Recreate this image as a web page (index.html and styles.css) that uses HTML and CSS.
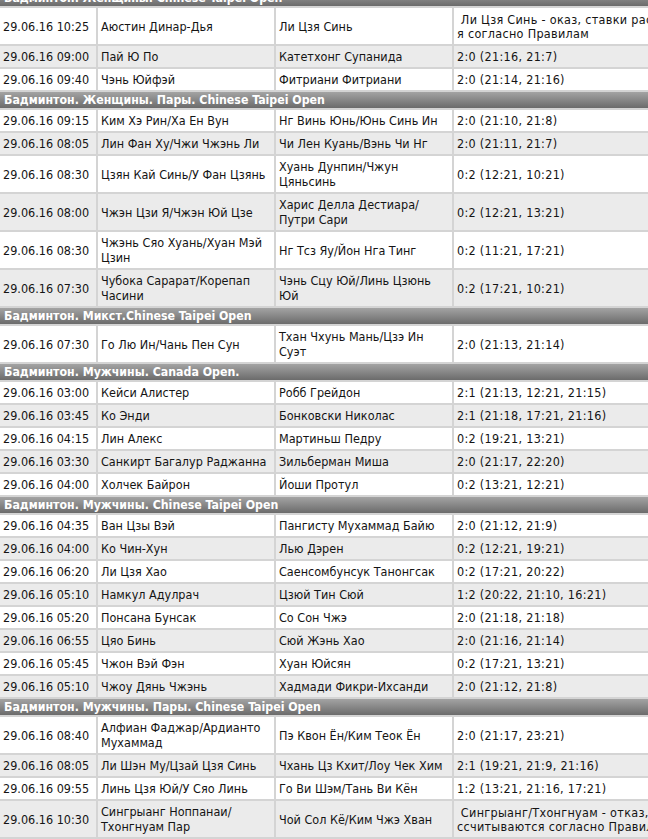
FILE: index.html
```html
<!DOCTYPE html>
<html lang="ru">
<head>
<meta charset="utf-8">
<title>Результаты</title>
<link rel="stylesheet" href="styles.css">
</head>
<body>
<table class="results">
<colgroup><col class="c-date"><col class="c-p1"><col class="c-p2"><col class="c-res"></colgroup>
<tbody>
<tr class="sec"><td colspan="4">Бадминтон. Женщины. Chinese Taipei Open</td></tr>
<tr><td>29.06.16 10:25</td><td>Аюстин Динар-Дья</td><td>Ли Цзя Синь</td><td class="note">&nbsp;Ли Цзя Синь - оказ, ставки рассчитываютс<br>я согласно Правилам</td></tr>
<tr class="alt"><td>29.06.16 09:00</td><td>Пай Ю По</td><td>Катетхонг Супанида</td><td>2:0 (21:16, 21:7)</td></tr>
<tr><td>29.06.16 09:40</td><td>Чэнь Юйфэй</td><td>Фитриани Фитриани</td><td>2:0 (21:14, 21:16)</td></tr>

<tr class="sec"><td colspan="4">Бадминтон. Женщины. Пары. Chinese Taipei Open</td></tr>
<tr><td>29.06.16 09:15</td><td>Ким Хэ Рин/Ха Ен Вун</td><td>Нг Винь Юнь/Юнь Синь Ин</td><td>2:0 (21:10, 21:8)</td></tr>
<tr class="alt"><td>29.06.16 08:05</td><td>Лин Фан Ху/Чжи Чжэнь Ли</td><td>Чи Лен Куань/Вэнь Чи Нг</td><td>2:0 (21:11, 21:7)</td></tr>
<tr><td>29.06.16 08:30</td><td>Цзян Кай Синь/У Фан Цзянь</td><td>Хуань Дунпин/Чжун<br>Цяньсинь</td><td>0:2 (12:21, 10:21)</td></tr>
<tr class="alt"><td>29.06.16 08:00</td><td>Чжэн Цзи Я/Чжэн Юй Цзе</td><td>Харис Делла Дестиара/<br>Путри Сари</td><td>0:2 (12:21, 13:21)</td></tr>
<tr><td>29.06.16 08:30</td><td>Чжэнь Сяо Хуань/Хуан Мэй<br>Цзин</td><td>Нг Тсз Яу/Йон Нга Тинг</td><td>0:2 (11:21, 17:21)</td></tr>
<tr class="alt"><td>29.06.16 07:30</td><td>Чубока Сарарат/Корепап<br>Часини</td><td>Чэнь Сцу Юй/Линь Цзюнь<br>Юй</td><td>0:2 (17:21, 10:21)</td></tr>

<tr class="sec"><td colspan="4">Бадминтон. Микст.Chinese Taipei Open</td></tr>
<tr><td>29.06.16 07:30</td><td>Го Лю Ин/Чань Пен Сун</td><td>Тхан Чхунь Мань/Цзэ Ин<br>Суэт</td><td>2:0 (21:13, 21:14)</td></tr>

<tr class="sec"><td colspan="4">Бадминтон. Мужчины. Canada Open.</td></tr>
<tr><td>29.06.16 03:00</td><td>Кейси Алистер</td><td>Робб Грейдон</td><td>2:1 (21:13, 12:21, 21:15)</td></tr>
<tr class="alt"><td>29.06.16 03:45</td><td>Ко Энди</td><td>Бонковски Николас</td><td>2:1 (21:18, 17:21, 21:16)</td></tr>
<tr><td>29.06.16 04:15</td><td>Лин Алекс</td><td>Мартиньш Педру</td><td>0:2 (19:21, 13:21)</td></tr>
<tr class="alt"><td>29.06.16 03:30</td><td>Санкирт Багалур Раджанна</td><td>Зильберман Миша</td><td>2:0 (21:17, 22:20)</td></tr>
<tr><td>29.06.16 04:00</td><td>Холчек Байрон</td><td>Йоши Протул</td><td>0:2 (13:21, 12:21)</td></tr>

<tr class="sec"><td colspan="4">Бадминтон. Мужчины. Chinese Taipei Open</td></tr>
<tr><td>29.06.16 04:35</td><td>Ван Цзы Вэй</td><td>Пангисту Мухаммад Байю</td><td>2:0 (21:12, 21:9)</td></tr>
<tr class="alt"><td>29.06.16 04:00</td><td>Ко Чин-Хун</td><td>Лью Дэрен</td><td>0:2 (12:21, 19:21)</td></tr>
<tr><td>29.06.16 06:20</td><td>Ли Цзя Хао</td><td>Саенсомбунсук Танонгсак</td><td>0:2 (17:21, 20:22)</td></tr>
<tr class="alt"><td>29.06.16 05:10</td><td>Намкул Адулрач</td><td>Цзюй Тин Сюй</td><td>1:2 (20:22, 21:10, 16:21)</td></tr>
<tr><td>29.06.16 05:20</td><td>Понсана Бунсак</td><td>Со Сон Чжэ</td><td>2:0 (21:18, 21:18)</td></tr>
<tr class="alt"><td>29.06.16 06:55</td><td>Цяо Бинь</td><td>Сюй Жэнь Хао</td><td>2:0 (21:16, 21:14)</td></tr>
<tr><td>29.06.16 05:45</td><td>Чжон Вэй Фэн</td><td>Хуан Юйсян</td><td>0:2 (17:21, 13:21)</td></tr>
<tr class="alt"><td>29.06.16 05:10</td><td>Чжоу Дянь Чжэнь</td><td>Хадмади Фикри-Ихсанди</td><td>2:0 (21:12, 21:8)</td></tr>

<tr class="sec"><td colspan="4">Бадминтон. Мужчины. Пары. Chinese Taipei Open</td></tr>
<tr><td>29.06.16 08:40</td><td>Алфиан Фаджар/Ардианто<br>Мухаммад</td><td>Пэ Квон Ён/Ким Теок Ён</td><td>2:0 (21:17, 23:21)</td></tr>
<tr class="alt"><td>29.06.16 08:05</td><td>Ли Шэн Му/Цзай Цзя Синь</td><td>Чхань Цз Кхит/Лоу Чек Хим</td><td>2:1 (19:21, 21:9, 21:16)</td></tr>
<tr><td>29.06.16 09:55</td><td>Линь Цзя Юй/У Сяо Линь</td><td>Го Ви Шэм/Тань Ви Кён</td><td>1:2 (13:21, 21:16, 17:21)</td></tr>
<tr class="alt"><td>29.06.16 10:30</td><td>Сингрыанг Ноппанаи/<br>Тхонгнуам Пар</td><td>Чой Сол Кё/Ким Чжэ Хван</td><td class="note">&nbsp;Сингрыанг/Тхонгнуам - отказ, ставки ра<br>ссчитываются согласно Правилам</td></tr>
</tbody>
</table>
</body>
</html>
```
FILE: styles.css
```css
html, body {
  margin: 0;
  padding: 0;
  background: #ffffff;
  overflow: hidden;
}
body {
  width: 648px;
  height: 839px;
}
.results {
  margin-top: -10px;
  border-collapse: collapse;
  table-layout: fixed;
  width: 780px;
  font-family: "DejaVu Sans Condensed", "DejaVu Sans", sans-serif;
  font-stretch: condensed;
  font-size: 12.5px;
  color: #141414;
}
.c-date { width: 97px; }
.c-p1 { width: 178px; }
.c-p2 { width: 178px; }
.c-res { width: 327px; }
.results td {
  padding: 3px 3px;
  line-height: 15px;
  vertical-align: middle;
  white-space: nowrap;
  overflow: hidden;
  border-bottom: 2px solid #d4d4d4;
  border-left: 2px solid #d4d4d4;
  background: #ffffff;
}
.results td:first-child {
  border-left: 0;
}
.results td:nth-child(4) {
  letter-spacing: 0.3px;
}
.results td.note {
  line-height: 14px;
  padding-top: 5px;
  padding-bottom: 3px;
}
.results tr.alt td {
  background: #ebebeb;
}
.results tr.sec td {
  height: 16px;
  padding: 0 4px;
  line-height: 16px;
  font-size: 12.25px;
  letter-spacing: 0;
  color: #ffffff;
  font-weight: bold;
  background: linear-gradient(#a3a3a3, #6b6b6b);
  border-left: 0;
}
```
